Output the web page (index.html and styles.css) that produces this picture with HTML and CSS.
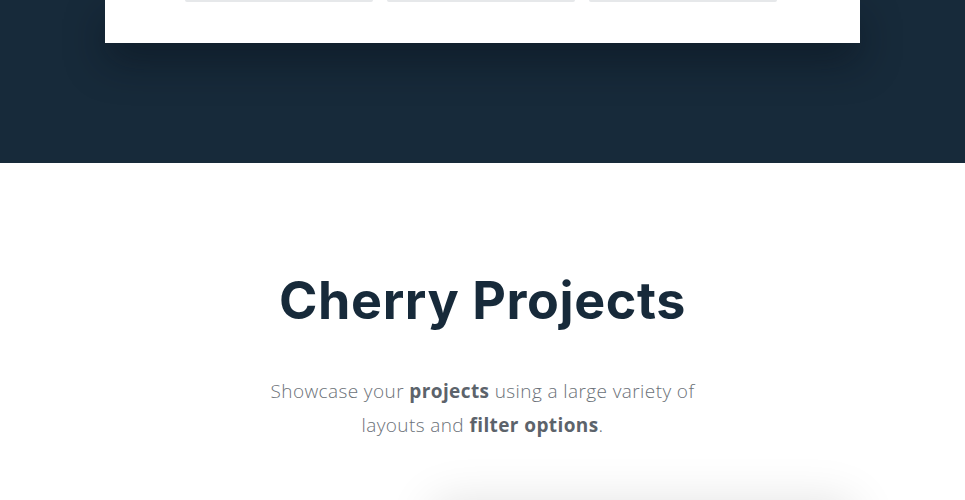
FILE: index.html
```html
<!DOCTYPE html>
<html lang="en">
<head>
<meta charset="utf-8">
<title>Cherry Projects</title>
<link rel="stylesheet" href="styles.css">
</head>
<body>
  <section class="hero">
    <div class="panel">
      <div class="tiles">
        <div class="tile"></div>
        <div class="tile"></div>
        <div class="tile"></div>
      </div>
    </div>
  </section>
  <section class="intro">
    <h2 class="intro-title">Cherry Projects</h2>
    <p class="intro-text">Showcase your <strong>projects</strong> using a large variety of<br>layouts and <strong>filter options</strong>.</p>
    <div class="showcase">
      <div class="showcase-card"></div>
    </div>
  </section>
</body>
</html>
```
FILE: styles.css
```css
* { box-sizing: border-box; }

html, body {
  margin: 0;
  padding: 0;
  background: #ffffff;
  overflow: hidden;
}

body {
  font-family: "Open Sans", "Lato", sans-serif;
}

.hero {
  background: #172a3a;
  height: 163px;
  padding: 0 105px;
}

.panel {
  background: #ffffff;
  height: 43px;
  box-shadow: 0 18px 40px rgba(6, 14, 22, 0.45);
  display: flex;
  justify-content: flex-start;
  padding-left: 80px;
}

.tiles {
  display: flex;
  gap: 14px;
  height: 2px;
}

.tile {
  width: 188px;
  height: 2px;
  border-bottom: 2px solid #e6e8ea;
  border-radius: 0 0 3px 3px;
}

.intro {
  text-align: center;
  padding-top: 108px;
}

.intro-title {
  margin: 0;
  font-family: "Inter", sans-serif;
  font-weight: 700;
  font-size: 52px;
  line-height: 60px;
  color: #172a3a;
  letter-spacing: 0.6px;
}

.intro-text {
  margin: 43px 0 0;
  font-family: "Open Sans", "Lato", sans-serif;
  font-weight: 300;
  font-size: 19px;
  line-height: 34px;
  letter-spacing: 0.4px;
  color: #6b7178;
}

.intro-text strong {
  font-weight: 700;
  color: #5c636b;
}

.showcase {
  display: flex;
  justify-content: center;
  padding-left: 320px;
  padding-top: 60px;
}

.showcase-card {
  width: 420px;
  height: 200px;
  background: #ffffff;
  box-shadow: 0 0 45px rgba(0, 0, 0, 0.12);
}
```
